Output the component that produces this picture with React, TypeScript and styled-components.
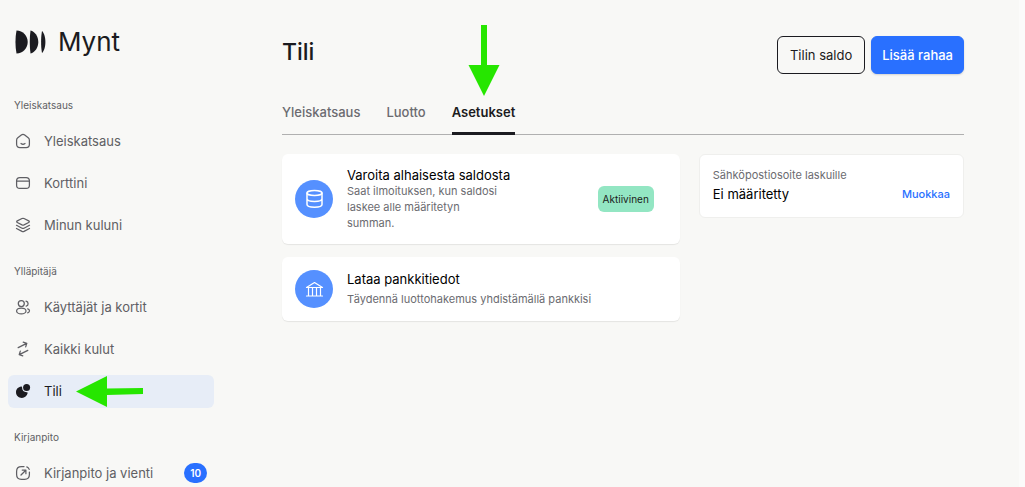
import React from "react";
import styled, { createGlobalStyle } from "styled-components";

const GlobalStyle = createGlobalStyle`
  *, *::before, *::after { box-sizing: border-box; }
  body {
    margin: 0;
    background: #f8f8f6;
    color: #1b1b20;
    font-family: Inter, "Liberation Sans", sans-serif;
    font-size: 13px;
  }
  h1, h2, p, ul { margin: 0; padding: 0; }
  button { font-family: inherit; cursor: pointer; }
  a { color: inherit; text-decoration: none; }
`;

const Page = styled.div`
  display: flex;
  height: 100vh;
  overflow: hidden;
  border-right: 6px solid #fbfbfa;
`;

const Sidebar = styled.aside`
  flex: none;
  width: 222px;
  padding: 26px 8px 0;
`;

const Brand = styled.a`
  display: flex;
  align-items: center;
  gap: 12px;
  height: 32px;
  padding-left: 7px;
  margin-bottom: 39px;
  font-size: 26px;
  line-height: 32px;
`;

const Section = styled.section`
  margin-bottom: 21px;
`;

const SectionLabel = styled.h2`
  padding-left: 6px;
  margin-bottom: 12px;
  font-size: 10px;
  font-weight: 400;
  line-height: 16px;
  color: #5f5f64;
`;

const NavList = styled.ul`
  display: flex;
  flex-direction: column;
  gap: 9px;
  list-style: none;
`;

const NavLink = styled.a<{ $active?: boolean }>`
  display: flex;
  align-items: center;
  height: 33px;
  padding: 0 7px 1px;
  border-radius: 6px;
  color: ${(p) => (p.$active ? "#1b1b20" : "#5f5f64")};
  background: ${(p) => (p.$active ? "#e7edf7" : "transparent")};

  svg { flex: none; margin-right: 13px; }
`;

const Count = styled.span`
  margin-left: auto;
  padding: 0 6px;
  border-radius: 10px;
  background: #2970ff;
  color: #fff;
  font-size: 10px;
  font-weight: 600;
  line-height: 20px;
`;

const Main = styled.main`
  flex: 1;
  min-width: 0;
  padding: 36px 55px 0 60px;
`;

const Header = styled.header`
  display: flex;
  align-items: flex-start;
  justify-content: space-between;
  margin-bottom: 25px;
`;

const Title = styled.h1`
  font-size: 23px;
  font-weight: 500;
  line-height: 32px;
`;

const Actions = styled.div`
  display: flex;
  gap: 6px;
`;

const Button = styled.button<{ $primary?: boolean }>`
  height: 38px;
  padding: 0 ${(p) => (p.$primary ? 10 : 12)}px;
  border: 1px solid ${(p) => (p.$primary ? "#2970ff" : "#1b1b20")};
  border-radius: 6px;
  background: ${(p) => (p.$primary ? "#2970ff" : "transparent")};
  color: ${(p) => (p.$primary ? "#fff" : "#1b1b20")};
  font-size: 13px;
  font-weight: ${(p) => (p.$primary ? 500 : 400)};
  box-shadow: ${(p) => (p.$primary ? "0 1px 2px rgba(0, 0, 0, 0.15)" : "none")};
`;

const Tabs = styled.nav`
  display: flex;
  gap: 26px;
  margin-bottom: 19px;
  border-bottom: 1px solid #b0b0b0;
`;

const Tab = styled.a<{ $active?: boolean }>`
  height: 36px;
  margin-bottom: -1px;
  border-bottom: 3px solid ${(p) => (p.$active ? "#1b1b20" : "transparent")};
  color: ${(p) => (p.$active ? "#1b1b20" : "#6b6b70")};
  font-size: 13px;
  font-weight: ${(p) => (p.$active ? 600 : 500)};
  line-height: 27px;
`;

const Columns = styled.div`
  display: grid;
  grid-template-columns: 3fr 2fr;
  gap: 19px;
  align-items: start;
`;

const CardList = styled.div`
  display: grid;
  gap: 13px;
`;

const Card = styled.article`
  display: flex;
  align-items: center;
  padding: 13px 26px 13px 13px;
  border-radius: 6px;
  background: #fff;
  box-shadow: 0 1px 1px rgba(0, 0, 0, 0.08);
`;

const Disc = styled.span`
  display: grid;
  flex: none;
  place-items: center;
  width: 38px;
  height: 38px;
  margin-right: 14px;
  border-radius: 50%;
  background: #5590ff;
`;

const CardText = styled.div<{ $narrow?: boolean }>`
  display: grid;
  gap: ${(p) => (p.$narrow ? 0 : 4)}px;
  max-width: ${(p) => (p.$narrow ? "156px" : "none")};
`;

const CardTitle = styled.h2`
  font-size: 13px;
  font-weight: 400;
  line-height: 16px;
  color: #000;
  white-space: nowrap;
`;

const Description = styled.p`
  font-size: 11px;
  line-height: 16px;
  color: #6b6b70;
`;

const Status = styled.span`
  margin-left: auto;
  padding: 0 5px;
  border-radius: 6px;
  background: #93e6c3;
  font-size: 10px;
  font-weight: 400;
  line-height: 26px;
`;

const EmailCard = styled.article`
  padding: 12px 13px;
  border: 1px solid #efefed;
  border-radius: 6px;
  background: #fff;
`;

const EmailRow = styled.div`
  display: flex;
  align-items: center;
  justify-content: space-between;
  line-height: 22px;
`;

const EmailValue = styled.span`
  color: #000;
`;

const EditButton = styled.button`
  padding: 0;
  border: 0;
  background: none;
  color: #2970ff;
  font-size: 11px;
  font-weight: 500;
  line-height: 22px;
`;

const DownArrow = styled.svg`
  position: absolute;
  top: 25px;
  left: 468px;
`;

const LeftArrow = styled.svg`
  position: absolute;
  top: 376px;
  left: 76px;
`;

const Icon = ({ children }: { children: React.ReactNode }) => (
  <svg width="16" height="16" viewBox="0 0 16 16" fill="none" stroke="currentColor" strokeWidth="1.250" strokeLinecap="round" strokeLinejoin="round" aria-hidden="true">
    {children}
  </svg>
);

const icons = {
  home: (
    <Icon>
      <path d="M1.600 7.200c0-1 .4-1.900 1.200-2.500L6.300 2c1-.8 2.400-.8 3.400 0l3.500 2.700c.8.6 1.200 1.500 1.200 2.500v4.100c0 2-1.300 3.400-3.300 3.400H4.900c-2 0-3.300-1.400-3.300-3.400z" />
      <path d="M6 10.500c1.200.9 2.800.9 4 0" />
    </Icon>
  ),
  card: (
    <Icon>
      <rect x="1.600" y="2.600" width="12.800" height="10.800" rx="3.200" />
      <path d="M1.800 6h12.400" />
    </Icon>
  ),
  layers: (
    <Icon>
      <path d="M7 1.500 2.300 3.900c-.8.400-.8 1.200 0 1.600L7 7.900c.7.300 1.300.300 2 0l4.700-2.400c.8-.4.8-1.200 0-1.600L9 1.500c-.7-.3-1.300-.3-2 0z" />
      <path d="M1.500 8.300 7 11.200c.7.300 1.300.3 2 0l5.500-2.900M1.500 11.500 7 14.400c.7.300 1.300.3 2 0l5.500-2.900" />
    </Icon>
  ),
  users: (
    <Icon>
      <circle cx="6.300" cy="4.600" r="3" />
      <ellipse cx="6.300" cy="11.900" rx="4.700" ry="2.900" />
      <path d="M11 2.200c1.300.3 2.100 1.300 2.100 2.500s-.8 2.100-1.900 2.500M12.700 9.800c1.100.4 1.800 1.100 1.800 2s-.7 1.700-1.800 2.100" />
    </Icon>
  ),
  swap: (
    <Icon>
      <path d="M3.200 6.600 11.700 2.400M8.200 1.200l3.600 1.100-1.100 3.600M12.800 9.400 4.300 13.600M5.300 10.100l-1.100 3.600 3.600 1.100" />
    </Icon>
  ),
  pie: (
    <Icon>
      <path fill="currentColor" stroke="none" d="M6.200 3.600c.6-.1.900.3.900.9-.1 2.900 1.900 4.800 4.700 4.700.6 0 .9.400.8 1-.5 2.700-2.900 4.700-5.700 4.700-3.300 0-5.900-2.600-5.900-5.700 0-2.900 2.200-5.200 5.200-5.600z" />
      <circle cx="11.600" cy="4.600" r="3.500" fill="currentColor" stroke="none" />
    </Icon>
  ),
  export: (
    <Icon>
      <path d="M14.400 7v2.600c0 3-1.700 4.800-4.800 4.800H6.400c-3.100 0-4.800-1.800-4.800-4.800V6.400c0-3.100 1.700-4.800 4.800-4.800H9M11.800 1.900c1.200.5 2 1.300 2.400 2.500M6 10l4.800-4.800M7.200 5h3.700v3.700" />
    </Icon>
  ),
};

type Item = { label: string; icon: React.ReactNode; active?: boolean; count?: number };

const sections: { label: string; items: Item[] }[] = [
  {
    label: "Yleiskatsaus",
    items: [
      { label: "Yleiskatsaus", icon: icons.home },
      { label: "Korttini", icon: icons.card },
      { label: "Minun kuluni", icon: icons.layers },
    ],
  },
  {
    label: "Ylläpitäjä",
    items: [
      { label: "Käyttäjät ja kortit", icon: icons.users },
      { label: "Kaikki kulut", icon: icons.swap },
      { label: "Tili", icon: icons.pie, active: true },
    ],
  },
  {
    label: "Kirjanpito",
    items: [{ label: "Kirjanpito ja vienti", icon: icons.export, count: 10 }],
  },
];

export default function App() {
  return (
    <>
      <GlobalStyle />
      <Page>
        <Sidebar>
          <Brand href="#">
            <svg width="31" height="24" viewBox="0 0 31 24" fill="#1b1b20" aria-hidden="true">
              <path d="M1.500.5C8 .5 12.700 6 12.700 12S8 23.500 1.500 23.500C.1 16 .1 8 1.500.5z" />
              <path d="M15.500.5c4.500 1 7.800 6 7.800 11.500s-3.300 10.500-7.800 11.500c-1-7-1-16 0-23z" />
              <path d="M27 1c2.200 2 3.400 6.500 3.400 11S29.200 21 27 23c-1.200-6-1.200-16 0-22z" />
            </svg>
            Mynt
          </Brand>
          {sections.map((section) => (
            <Section key={section.label}>
              <SectionLabel>{section.label}</SectionLabel>
              <NavList>
                {section.items.map((item) => (
                  <li key={item.label}>
                    <NavLink href="#" $active={item.active} aria-current={item.active ? "page" : undefined}>
                      {item.icon}
                      {item.label}
                      {item.count !== undefined && <Count>{item.count}</Count>}
                    </NavLink>
                  </li>
                ))}
              </NavList>
            </Section>
          ))}
        </Sidebar>

        <Main>
          <Header>
            <Title>Tili</Title>
            <Actions>
              <Button type="button">Tilin saldo</Button>
              <Button type="button" $primary>Lisää rahaa</Button>
            </Actions>
          </Header>

          <Tabs>
            <Tab href="#">Yleiskatsaus</Tab>
            <Tab href="#">Luotto</Tab>
            <Tab href="#" $active aria-current="page">Asetukset</Tab>
          </Tabs>

          <Columns>
            <CardList>
              <Card>
                <Disc>
                  <svg width="20" height="20" viewBox="0 0 20 20" fill="none" stroke="#fff" strokeWidth="1.500" strokeLinecap="round" aria-hidden="true">
                    <ellipse cx="10.500" cy="4" rx="7.500" ry="2.500" />
                    <path d="M3 4v11.600c0 1.500 3.300 2.700 7.500 2.700s7.500-1.200 7.500-2.700V4M3 9.800c0 1.500 3.300 2.700 7.500 2.700s7.500-1.200 7.500-2.700" />
                  </svg>
                </Disc>
                <CardText $narrow>
                  <CardTitle>Varoita alhaisesta saldosta</CardTitle>
                  <Description>Saat ilmoituksen, kun saldosi laskee alle määritetyn summan.</Description>
                </CardText>
                <Status>Aktiivinen</Status>
              </Card>
              <Card>
                <Disc>
                  <svg width="20" height="20" viewBox="0 0 20 20" fill="none" stroke="#fff" strokeWidth="1.200" strokeLinecap="round" strokeLinejoin="round" aria-hidden="true">
                    <path d="M2.500 8.500 10.500 3.500l8 5zM4.500 8.500v8M8.500 8.500v8M12.500 8.500v8M16.500 8.500v8M2.500 17h16" />
                  </svg>
                </Disc>
                <CardText>
                  <CardTitle>Lataa pankkitiedot</CardTitle>
                  <Description>Täydennä luottohakemus yhdistämällä pankkisi</Description>
                </CardText>
              </Card>
            </CardList>

            <EmailCard>
              <Description>Sähköpostiosoite laskuille</Description>
              <EmailRow>
                <EmailValue>Ei määritetty</EmailValue>
                <EditButton type="button">Muokkaa</EditButton>
              </EmailRow>
            </EmailCard>
          </Columns>
        </Main>
      </Page>

      <DownArrow width="32" height="71" viewBox="0 0 32 71" fill="#26e600" aria-hidden="true">
        <path d="M13 0h6v40h12.500L16 71 .5 40H13z" />
      </DownArrow>
      <LeftArrow width="68" height="32" viewBox="0 0 68 32" fill="#26e600" aria-hidden="true">
        <path d="M0 15.500 31 0v12.500l36-.5v6l-36 1v12z" />
      </LeftArrow>
    </>
  );
}
